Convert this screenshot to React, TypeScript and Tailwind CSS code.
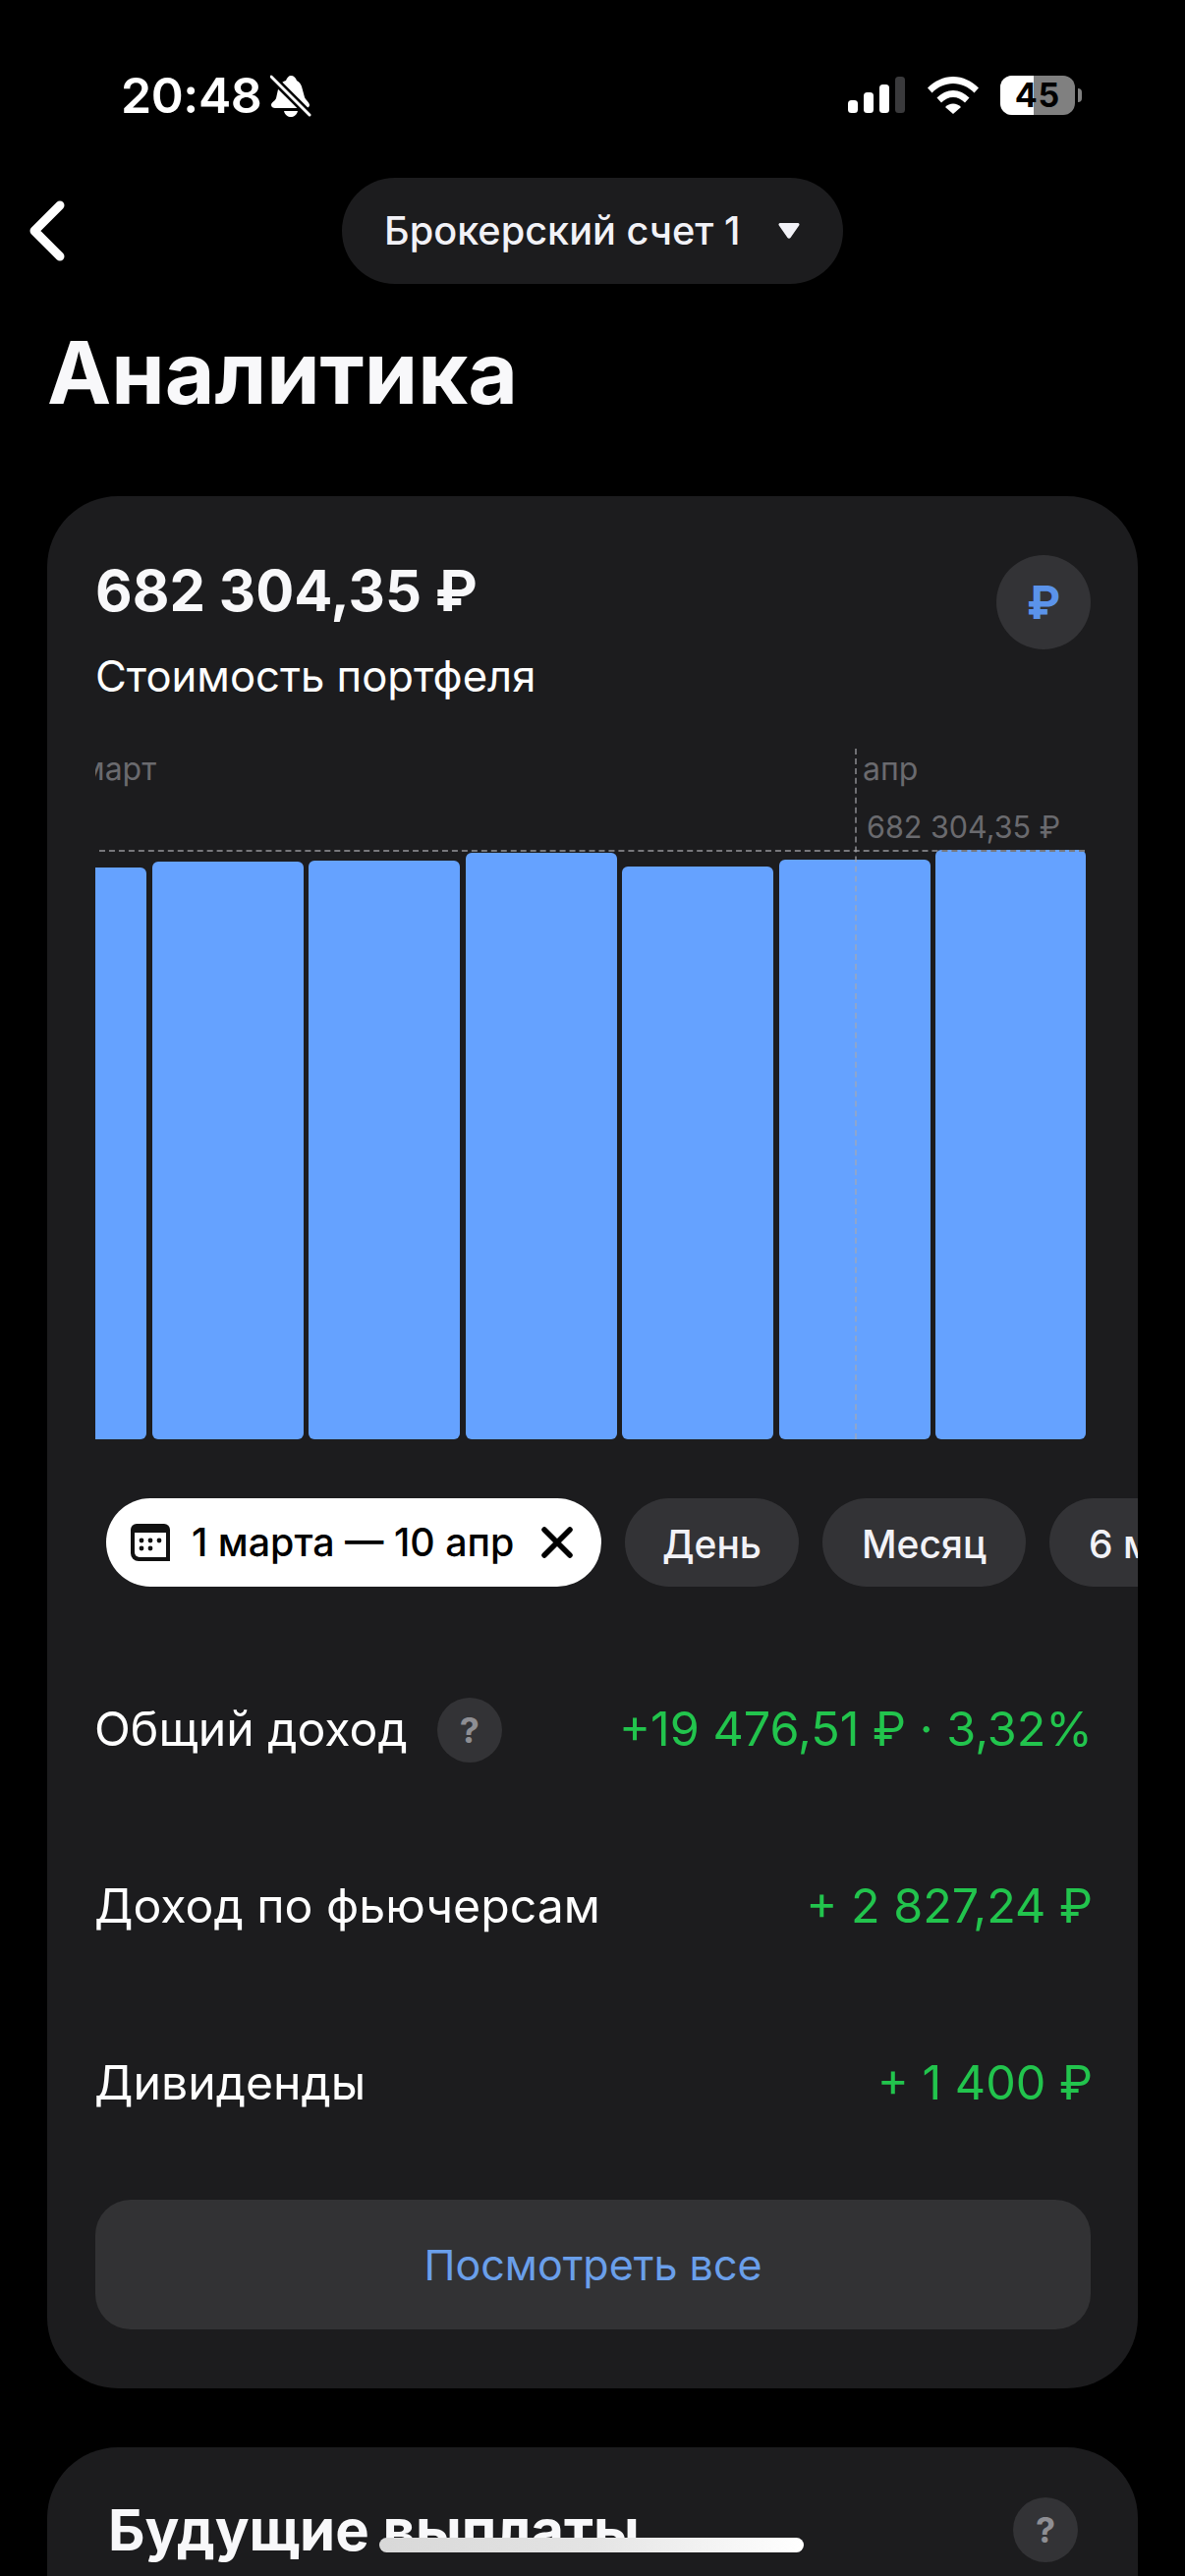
import React from "react";

const bars = [
  { width: 53, height: 582 },
  { width: 154, height: 588 },
  { width: 154, height: 589 },
  { width: 154, height: 597 },
  { width: 154, height: 583 },
  { width: 154, height: 590 },
  { width: 153, height: 600 },
];

const rows = [
  { label: "Общий доход", value: "+19 476,51 ₽ · 3,32%", help: true },
  { label: "Доход по фьючерсам", value: "+ 2 827,24 ₽", help: false },
  { label: "Дивиденды", value: "+ 1 400 ₽", help: false },
];

function StatusBar() {
  return (
    <div className="absolute left-0 top-0 flex h-[181px] w-full items-start justify-between pl-[123px] pr-[105px] pt-[70px]">
      <div className="flex items-center gap-[9px]">
        <span className="text-[50px] leading-[54px] font-semibold tracking-[-0.4px] text-white">20:48</span>
        <svg width="42" height="44" viewBox="0 0 42 44" fill="none">
          <path d="M21 2c3 0 5 2 6 5 2 1 4 3 5 6l3 11c1 3 5 5 5 8 0 2-2 3-4 3H5c-2 0-4-1-4-3 0-3 4-4 5-7l2-9c1-5 4-8 8-9 1-3 3-5 5-5z" fill="#fff" />
          <path d="M14 38h14c-1 4-4 6-7 6s-6-2-7-6z" fill="#fff" />
          <path d="M0 2l41 41" stroke="#000" strokeWidth="8" />
          <path d="M1 3l39 39" stroke="#fff" strokeWidth="3" strokeLinecap="round" />
        </svg>
      </div>
      <div className="flex items-center gap-[22px] pt-[7px]">
        <svg width="60" height="38" viewBox="0 0 60 38">
          <rect x="1" y="24" width="10" height="13" rx="3.5" fill="#fff" />
          <rect x="17" y="16" width="10" height="21" rx="3.5" fill="#fff" />
          <rect x="33" y="8" width="10" height="29" rx="3.5" fill="#fff" />
          <rect x="49" y="0" width="10" height="37" rx="3.5" fill="#3a3a3c" />
        </svg>
        <svg width="52" height="38" viewBox="0 0 52 38">
          <path d="M0 11.500C7 4.500 16 0 26 0s19 4.500 26 11.500l-4.500 5C41.500 10.500 34 7 26 7s-15.500 3.500-21.500 9.500z" fill="#fff" />
          <path d="M9.500 21.500C14 17 20 14 26 14s12 3 16.500 7.500L38 26.500C34.500 23 30.500 21 26 21s-8.500 2-12 5.500z" fill="#fff" />
          <path d="M18 31c2-2 5-3.500 8-3.500s6 1.500 8 3.500l-8 7z" fill="#fff" />
        </svg>
        <div className="flex items-center gap-[3px]">
          <div className="relative flex h-[40px] w-[76px] items-center justify-center overflow-hidden rounded-[12px] bg-[#808080]">
            <div className="absolute inset-y-0 left-0 w-[34px] bg-white" />
            <span className="relative text-[34px] leading-none font-bold tracking-[1px] text-black">45</span>
          </div>
          <div className="h-[14px] w-[4px] rounded-r-full bg-[#808080]" />
        </div>
      </div>
    </div>
  );
}

function QuestionBadge() {
  return (
    <div className="flex h-[66px] w-[66px] items-center justify-center rounded-full bg-[#333336] text-[36px] leading-none font-bold text-[#8e8e93]">?</div>
  );
}

export default function App() {
  return (
    <div className="relative h-[2622px] w-[1206px] overflow-hidden bg-black font-['Inter',sans-serif] text-white">
      <StatusBar />

      <div className="grid grid-cols-[1fr_auto_1fr] items-center pt-[181px]">
        <svg className="ml-[26px]" width="42" height="64" viewBox="0 0 42 64" fill="none">
          <path d="M35 6L9 32l26 26" stroke="#fff" strokeWidth="9" strokeLinecap="round" strokeLinejoin="round" />
        </svg>
        <div className="flex h-[108px] w-[510px] items-center rounded-full bg-[#1c1c1e] pl-[43px]">
          <span className="pt-[2px] text-[39.7px] leading-none font-medium whitespace-nowrap text-[#f2f2f7]">Брокерский счет 1</span>
          <svg className="ml-auto mr-[44px]" width="22" height="18" viewBox="0 0 22 18">
            <path d="M2 1h18c1.500 0 2 1.500 1.200 2.500L12.500 16c-.8 1-2.200 1-3 0L.8 3.500C0 2.500.5 1 2 1z" fill="#f2f2f7" />
          </svg>
        </div>
        <div />
      </div>

      <h1 className="ml-[48px] mt-[40px] h-[101px] text-[87.4px] leading-[100px] font-bold text-[#f8f8fa]">Аналитика</h1>

      <section className="mx-[48px] mt-[75px] rounded-[72px] bg-[#1c1c1e] pb-[60px] pl-[49px] pr-[48px] pt-[61px]">
        <div className="flex items-start justify-between">
          <div>
            <div className="text-[58px] leading-[70px] font-bold text-[#f8f8fa]">682 304,35 ₽</div>
            <div className="mt-[25px] mb-[-1px] text-[43.6px] leading-[56px] text-white">Стоимость портфеля</div>
          </div>
          <div className="-mt-px flex h-[96px] w-[96px] items-center justify-center rounded-full bg-[#333336] text-[46px] leading-none font-bold text-[#5b93ea]">₽</div>
        </div>

        <div className="relative mt-[46px] flex h-[703px] w-[1010px] items-end gap-[5.5px] overflow-hidden">
          {bars.map((bar, i) => (
            <div
              key={i}
              className={i === 0 ? "ml-[-1px] rounded-tr-[6px] rounded-br-[6px] bg-[#65a2ff]" : "rounded-[6px] bg-[#65a2ff]"}
              style={{ width: bar.width, height: bar.height }}
            />
          ))}
          <span className="absolute -left-[15px] top-[1px] text-[32px] leading-[40px] text-[#6a6a6e]">март</span>
          <span className="absolute left-[781px] top-[1px] text-[32px] leading-[40px] text-[#6a6a6e]">апр</span>
          <span className="absolute left-[785px] top-[60px] text-[30.5px] leading-[40px] text-[#6a6a6e]">682 304,35 ₽</span>
          <div className="absolute left-[4px] right-[3px] top-[103px] border-t-2 border-dashed border-[#77777b]" />
          <div className="absolute bottom-0 left-[773px] top-0 border-l-2 border-dashed border-[#a9a9ad]/60" />
        </div>

        <div className="-mr-[48px] ml-[11px] mt-[60px] flex h-[90px] gap-[24px] overflow-hidden">
          <div className="flex w-[504px] shrink-0 items-center rounded-full bg-white pl-[25px] text-black">
            <svg width="40" height="38" viewBox="0 0 40 38" fill="none">
              <path d="M6 0h28a6 6 0 0 1 6 6v32H8a8 8 0 0 1-8-8V6a6 6 0 0 1 6-6z" fill="#111" />
              <path d="M4 9h32v25H9a5 5 0 0 1-5-5z" fill="#fff" />
              <circle cx="11" cy="17" r="2.400" fill="#111" />
              <circle cx="20" cy="17" r="2.400" fill="#111" />
              <circle cx="29" cy="17" r="2.400" fill="#111" />
              <circle cx="11" cy="25" r="2.400" fill="#111" />
              <circle cx="20" cy="25" r="2.400" fill="#111" />
            </svg>
            <span className="ml-[22px] pt-[2px] text-[39.4px] leading-none font-medium whitespace-nowrap">1 марта — 10 апр</span>
            <svg className="ml-auto mr-[29px]" width="32" height="32" viewBox="0 0 32 32" fill="none">
              <path d="M3 3l26 26M29 3L3 29" stroke="#000" strokeWidth="5.500" strokeLinecap="round" />
            </svg>
          </div>
          <div className="flex w-[177px] shrink-0 items-center justify-center rounded-full bg-[#333336] pt-[2px] text-[39px] leading-none font-medium text-[#f2f2f7]">День</div>
          <div className="flex w-[207px] shrink-0 items-center justify-center rounded-full bg-[#333336] pt-[2px] text-[39px] leading-none font-medium text-[#f2f2f7]">Месяц</div>
          <div className="flex w-[220px] shrink-0 items-center rounded-full bg-[#333336] pl-[40px] pt-[2px] text-[39px] leading-none font-medium whitespace-nowrap text-[#f2f2f7]">6 мес</div>
        </div>

        <div className="mt-[57px] flex flex-col">
          {rows.map((row) => (
            <div key={row.label} className="flex h-[180px] items-center justify-between pb-[3px]">
              <div className="flex items-center gap-[30px]">
                <span className="-ml-px text-[48.2px] leading-none text-white">{row.label}</span>
                {row.help && <QuestionBadge />}
              </div>
              <span className="-mr-[2px] text-[48.5px] leading-none text-[#22c44d]">{row.value}</span>
            </div>
          ))}
        </div>

        <div className="mt-[27px] flex h-[132px] items-center justify-center rounded-[36px] bg-[#323234] text-[43px] leading-none text-[#6a9fea]">
          Посмотреть все
        </div>
      </section>

      <section className="mx-[48px] mt-[60px] flex h-[200px] items-start justify-between rounded-t-[72px] bg-[#1c1c1e] pl-[62px] pr-[61px] pt-[49px]">
        <h2 className="text-[58px] leading-[70px] font-bold text-[#f8f8fa]">Будущие выплаты</h2>
        <div className="mt-[2px]">
          <QuestionBadge />
        </div>
      </section>

      <div className="absolute left-[386px] top-[2583px] h-[15px] w-[432px] rounded-full bg-gradient-to-r from-[#d8d8d8] via-[#e4e4e4] to-white" />
    </div>
  );
}
